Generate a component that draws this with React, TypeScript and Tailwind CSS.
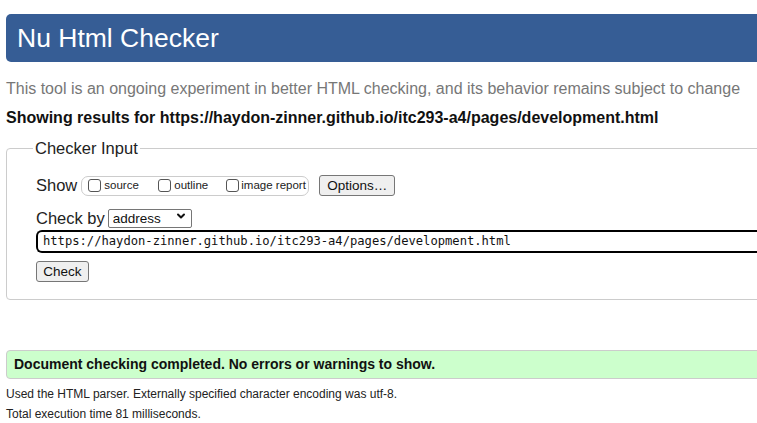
import { ChevronDown } from 'lucide-react';

export default function App() {
    const url = 'https://haydon-zinner.github.io/itc293-a4/pages/development.html';

    return (
        <div className="w-[757px] h-[423px] overflow-hidden bg-white" style={{ fontFamily: '"Liberation Sans", Arial, sans-serif' }}>
            <div className="w-[900px] pl-[6px] pt-[14px]">
                {/* Header */}
                <h1 className="h-[48px] flex items-center pl-[11px] rounded-l-[5px] bg-[#365d95] text-white text-[26.5px] leading-none">
                    Nu Html Checker
                </h1>

                <p className="mt-[17px] text-[16px] leading-[20px] text-[#777]">
                    This tool is an ongoing experiment in better HTML checking, and its behavior remains subject to change
                </p>
                <p className="mt-[9px] text-[16px] leading-[20px] font-bold text-[#111]">
                    Showing results for {url}
                </p>

                {/* Checker input */}
                <fieldset className="mt-[10px] border border-[#ccc] rounded-[4px] pl-[29px] pb-[16px] pt-[17px]">
                    <legend className="ml-[-3px] px-[2px] text-[16.5px] leading-[20px] text-[#222]">Checker Input</legend>

                    <div className="flex items-center h-[21px]">
                        <span className="text-[16.5px] text-[#222] mr-[4px]">Show</span>
                        <div className="flex items-center h-[20px] w-[228px] border border-[#ccc] rounded-[7px] pl-[6px] text-[11.5px] text-[#222]">
                            <label className="flex items-center w-[70px]">
                                <input type="checkbox" className="appearance-none w-[13px] h-[13px] border border-[#555] rounded-[3px] bg-white mr-[3px]" />
                                source
                            </label>
                            <label className="flex items-center w-[68px]">
                                <input type="checkbox" className="appearance-none w-[13px] h-[13px] border border-[#555] rounded-[3px] bg-white mr-[3px]" />
                                outline
                            </label>
                            <label className="flex items-center">
                                <input type="checkbox" className="appearance-none w-[13px] h-[13px] border border-[#555] rounded-[3px] bg-white mr-[2px]" />
                                image report
                            </label>
                        </div>
                        <button className="ml-[10px] h-[21px] w-[76px] border border-[#767676] rounded-[3px] bg-[#efefef] text-[13.5px] text-[#111]">
                            Options…
                        </button>
                    </div>

                    <div className="flex items-center mt-[12px] h-[20px]">
                        <span className="text-[16.5px] text-[#222] mr-[3px]">Check by</span>
                        <div className="relative">
                            <select className="appearance-none w-[84px] h-[19px] border border-[#767676] rounded-[2px] bg-white pl-[4px] text-[13.5px] leading-none text-[#111]">
                                <option>address</option>
                            </select>
                            <ChevronDown className="absolute right-[5px] top-[4px] w-[12px] h-[12px] pointer-events-none text-[#111]" strokeWidth={4} />
                        </div>
                    </div>

                    <div className="mt-[2px] h-[23px] flex items-center border-[2.5px] border-r-0 border-black rounded-l-[6px] pl-[5px] text-[12.15px] text-[#111]" style={{ fontFamily: '"DejaVu Sans Mono", monospace' }}>
                        {url}
                    </div>

                    <button className="mt-[8px] h-[21px] w-[53px] border border-[#767676] rounded-[3px] bg-[#efefef] text-[13.5px] text-[#111]">
                        Check
                    </button>
                </fieldset>

                {/* Result */}
                <div className="mt-[50px] h-[29px] flex items-center pl-[7px] border border-[#ccc] rounded-l-[4px] bg-[#ccffcc] text-[14px] font-bold text-[#111]">
                    Document checking completed. No errors or warnings to show.
                </div>
                <p className="mt-[5px] text-[12px] leading-[20px] text-[#222]">
                    Used the HTML parser. Externally specified character encoding was utf-8.
                </p>
                <p className="text-[12px] leading-[20px] text-[#222]">
                    Total execution time 81 milliseconds.
                </p>
            </div>
        </div>
    );
}
